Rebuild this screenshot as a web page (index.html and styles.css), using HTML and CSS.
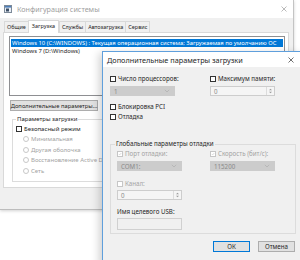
FILE: index.html
```html
<!DOCTYPE html>
<html lang="ru">
<head>
<meta charset="utf-8">
<title>Конфигурация системы</title>
<link rel="stylesheet" href="styles.css">
</head>
<body>
<div class="desk">
  <div class="win main">
    <div class="tbar">
      <svg class="appicon" viewBox="0 0 8 8" width="8" height="8">
        <rect x="0.5" y="0.5" width="7" height="7" fill="#e9eef5" stroke="#7d8a99"/>
        <rect x="1" y="1" width="6" height="1.6" fill="#4f7fb8"/>
        <rect x="2" y="3.5" width="3" height="3" fill="#3d4f66"/>
      </svg>
      <span class="ttl">Конфигурация системы</span>
      <svg class="xbtn" viewBox="0 0 6 6" width="6" height="6"><path d="M0.5 0.5L5.5 5.5M5.5 0.5L0.5 5.5" stroke="#a8a8a8" stroke-width="0.8"/></svg>
    </div>
    <div class="mbody">
      <div class="tabs">
        <span class="tab">Общие</span>
        <span class="tab sel">Загрузка</span>
        <span class="tab">Службы</span>
        <span class="tab">Автозагрузка</span>
        <span class="tab">Сервис</span>
      </div>
      <div class="panel">
        <div class="listbox">
          <div class="item sel">Windows 10 (C:\WINDOWS) : Текущая операционная система; Загружаемая по умолчанию ОС</div>
          <div class="item">Windows 7 (D:\Windows)</div>
        </div>
        <div class="btnrow"><span class="btn wide">Дополнительные параметры...</span></div>
        <fieldset class="group">
          <legend>Параметры загрузки</legend>
          <label class="chk"><span class="cb"></span>Безопасный режим</label>
          <div class="radios">
            <label class="rad"><span class="rb"></span>Минимальная</label>
            <label class="rad"><span class="rb"></span>Другая оболочка</label>
            <label class="rad"><span class="rb"></span>Восстановление Active Directory</label>
            <label class="rad"><span class="rb"></span>Сеть</label>
          </div>
        </fieldset>
      </div>
    </div>
  </div>

  <div class="win dlg">
    <div class="dtbar">
      <span class="dttl">Дополнительные параметры загрузки</span>
      <svg class="dx" viewBox="0 0 6 6" width="6" height="6"><path d="M0.5 0.5L5.5 5.5M5.5 0.5L0.5 5.5" stroke="#333" stroke-width="0.7"/></svg>
    </div>
    <div class="dbody">
      <div class="cols">
        <div class="col">
          <label class="chk"><span class="cb"></span>Число процессоров:</label>
          <div class="combo"><span>1</span><svg viewBox="0 0 6 4" width="6" height="4"><path d="M0.8 0.8L3 3L5.2 0.8" fill="none" stroke="#a9a9a9" stroke-width="0.6"/></svg></div>
        </div>
        <div class="col">
          <label class="chk"><span class="cb"></span>Максимум памяти:</label>
          <div class="spin"><span class="sv">0</span><span class="arrows"><svg viewBox="0 0 6 4" width="5" height="3"><path d="M1 3L3 1L5 3Z" fill="#9a9a9a"/></svg><svg viewBox="0 0 6 4" width="5" height="3"><path d="M1 1L3 3L5 1Z" fill="#9a9a9a"/></svg></span></div>
        </div>
      </div>
      <label class="chk pci"><span class="cb"></span>Блокировка PCI</label>
      <label class="chk dbg"><span class="cb"></span>Отладка</label>
      <fieldset class="dgroup">
        <legend>Глобальные параметры отладки</legend>
        <div class="gcols">
          <div class="gcol">
            <label class="chk dis"><span class="cb on"><svg viewBox="0 0 6 6" width="6" height="6"><path d="M1.2 3.1L2.5 4.4L4.9 1.5" fill="none" stroke="#b8b8b8" stroke-width="0.7"/></svg></span>Порт отладки:</label>
            <div class="combo"><span>COM1:</span><svg viewBox="0 0 6 4" width="6" height="4"><path d="M0.8 0.8L3 3L5.2 0.8" fill="none" stroke="#a9a9a9" stroke-width="0.6"/></svg></div>
          </div>
          <div class="gcol">
            <label class="chk dis"><span class="cb on"><svg viewBox="0 0 6 6" width="6" height="6"><path d="M1.2 3.1L2.5 4.4L4.9 1.5" fill="none" stroke="#b8b8b8" stroke-width="0.7"/></svg></span>Скорость (бит/с):</label>
            <div class="combo"><span>115200</span><svg viewBox="0 0 6 4" width="6" height="4"><path d="M0.8 0.8L3 3L5.2 0.8" fill="none" stroke="#a9a9a9" stroke-width="0.6"/></svg></div>
          </div>
        </div>
        <label class="chk dis kan"><span class="cb"></span>Канал:</label>
        <div class="spin short"><span class="sv">0</span><span class="arrows"><svg viewBox="0 0 6 4" width="5" height="3"><path d="M1 3L3 1L5 3Z" fill="#9a9a9a"/></svg><svg viewBox="0 0 6 4" width="5" height="3"><path d="M1 1L3 3L5 1Z" fill="#9a9a9a"/></svg></span></div>
        <div class="lbl usb">Имя целевого USB:</div>
        <div class="tbox"></div>
      </fieldset>
      <div class="btns">
        <span class="btn def">ОК</span>
        <span class="btn">Отмена</span>
      </div>
    </div>
  </div>
</div>
</body>
</html>
```
FILE: styles.css
```css
* { box-sizing: border-box; margin: 0; padding: 0; }
html, body { width: 300px; height: 260px; overflow: hidden; }
body {
  background: #ffffff;
  font-family: "Noto Sans", "Open Sans", sans-serif;
  font-size: 6px;
  color: #1e1e1e;
}
.desk { position: relative; width: 300px; height: 260px; }
.win { position: absolute; }

/* main window */
.main {
  left: 0; top: 0; width: 294px; height: 210px;
  background: #f0f0f0;
  border-right: 1px solid #c4c4c4;
  border-bottom: 1px solid #bdbdbd;
  box-shadow: 0 1px 3px rgba(0,0,0,0.18);
  display: flex; flex-direction: column;
}
.tbar {
  height: 18px; background: #fff;
  display: flex; align-items: center;
  padding: 0 6px 0 4px;
}
.appicon { flex: none; }
.ttl { margin-left: 5px; color: #a0a0a0; font-size: 7.2px; }
.xbtn { margin-left: auto; }
.mbody { flex: 1; display: flex; flex-direction: column; padding: 2px 4px 0 3px; }
.tabs { display: flex; height: 12px; align-items: flex-end; padding-left: 1px; }
.tab {
  height: 11px; line-height: 10px; padding: 0 2px;
  border: 1px solid #d9d9d9; border-bottom: none; margin-right: -1px;
  background: #f0f0f0; color: #1e1e1e; font-size: 5.5px; white-space: nowrap;
}
.tab.sel {
  height: 13px; background: #fff; margin-bottom: -1px; position: relative; z-index: 1;
  padding: 0 3px; margin-right: 0;
}
.panel {
  height: 156px; background: #fff; border: 1px solid #d9d9d9;
  padding: 3px 3px 0 5px;
  display: flex; flex-direction: column;
}
.listbox {
  height: 60px; border: 1px solid #8e8f92; background: #fff;
  padding: 2px 1px; overflow: hidden; font-size: 5.85px;
}
.item { height: 8px; line-height: 8px; padding-left: 1px; white-space: nowrap; overflow: hidden; }
.item.sel { background: #0078d7; color: #fff; }
.btnrow { margin-top: 4px; display: flex; }
.btn {
  display: inline-flex; align-items: center; justify-content: center;
  height: 11px; background: #e1e1e1; border: 1px solid #adadad; color: #1e1e1e;
  white-space: nowrap;
}
.btn.wide { width: 88px; margin-left: 1px; font-size: 5.8px; }
.group {
  margin: 4px 2px 0 3px; border: 1px solid #dcdcdc; height: 67px;
  padding: 2px 3px 0 3px;
}
.group legend { padding: 0 1px; line-height: 8px; }
.chk { display: flex; align-items: center; height: 8px; line-height: 8px; white-space: nowrap; }
.cb {
  flex: none; width: 6px; height: 6px; border: 1px solid #333; background: #fff;
  margin-right: 2px; display: flex; align-items: center; justify-content: center;
}
.cb svg { display: block; }
.radios { display: flex; flex-direction: column; gap: 2.6px; margin-top: 2px; padding-left: 7px; }
.rad { display: flex; align-items: center; height: 8px; color: #a3a3a3; white-space: nowrap; }
.rb { flex: none; width: 6px; height: 6px; border: 1px solid #c8c8c8; border-radius: 50%; margin-right: 2px; background: #fff; }

/* dialog */
.dlg {
  left: 102px; top: 51px; width: 201px; height: 215px;
  background: #f0f0f0; border: 1px solid #5f9fdc;
  box-shadow: -3px 2px 8px rgba(0,0,0,0.18);
  display: flex; flex-direction: column;
}
.dtbar { height: 15px; background: #fff; display: flex; align-items: center; padding: 0 8px 0 4px; }
.dttl { font-size: 7.3px; color: #1e1e1e; }
.dx { margin-left: auto; }
.dbody { padding: 8px 6px 0 7px; display: flex; flex-direction: column; font-size: 6.2px; }
.cols { display: flex; gap: 35px; }
.col { width: 65px; display: flex; flex-direction: column; gap: 3px; }
.combo {
  height: 10px; background: #cccccc; border: 1px solid #cccccc; color: #8a8a8a;
  display: flex; align-items: center; justify-content: space-between; padding: 0 4px 0 3px;
}
.spin {
  height: 10px; background: #f5f5f5; border: 1px solid #cdcdcd; color: #8a8a8a;
  display: flex; align-items: stretch;
}
.sv { flex: 1; display: flex; align-items: center; padding-left: 3px; }
.arrows { width: 8px; border-left: 1px solid #dcdcdc; display: flex; flex-direction: column; align-items: center; justify-content: center; }
.arrows svg { display: block; }
.pci { margin-top: 7px; }
.dbg { margin-top: 2px; }
.dgroup {
  margin-top: 19px; width: 186px; border: 1px solid #dcdcdc;
  padding: 2px 6px 3px 6px;
}
.dgroup legend { padding: 0 1px; line-height: 8px; margin-left: -2px; }
.gcols { display: flex; gap: 28px; }
.gcol { width: 65px; display: flex; flex-direction: column; gap: 3px; }
.dis { color: #a3a3a3; }
.dis .cb { border-color: #c6c6c6; }
.kan { margin-top: 9px; }
.spin.short { width: 65px; margin-top: 2px; }
.lbl { height: 8px; line-height: 8px; }
.usb { margin-top: 8px; }
.tbox { width: 65px; height: 12px; margin-top: 2px; border: 1px solid #d0d0d0; background: #f0f0f0; }
.btns { display: flex; justify-content: flex-end; gap: 8px; margin-top: 7px; padding-right: 1px; }
.btns .btn { width: 37px; height: 11px; }
.btn.def { border-color: #0078d7; }
```
